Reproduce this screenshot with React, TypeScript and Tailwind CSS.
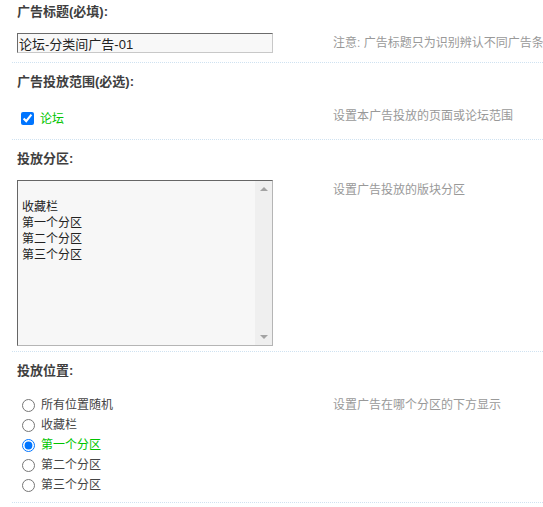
import React, { useState } from "react";

const FONT = { fontFamily: '"Liberation Sans", "Noto Sans CJK SC", sans-serif' };

const zones = ["", "收藏栏", "第一个分区", "第二个分区", "第三个分区"];
const positions = ["所有位置随机", "收藏栏", "第一个分区", "第二个分区", "第三个分区"];

function Heading({ children }: { children: React.ReactNode }) {
  return <div className="h-6 leading-6 pl-[5px] text-[13px] font-bold text-[#3f3f3f]">{children}</div>;
}

function Hint({ children }: { children: React.ReactNode }) {
  return <div className="leading-5 text-xs text-[#999] whitespace-nowrap">{children}</div>;
}

function Row({
  first,
  top,
  bottom,
  title,
  control,
  hint,
}: {
  first?: boolean;
  top: string;
  bottom: string;
  title: string;
  control: React.ReactNode;
  hint: string;
}) {
  return (
    <div className={`${first ? "" : "border-t border-dotted border-[#cfe2f1] pt-[7px]"} ${bottom}`}>
      <Heading>{title}</Heading>
      <div className={`flex ${top}`}>
        <div className="w-[321px] shrink-0 pl-[5px]">{control}</div>
        <Hint>{hint}</Hint>
      </div>
    </div>
  );
}

export default function App() {
  const [title, setTitle] = useState("论坛-分类间广告-01");
  const [forum, setForum] = useState(true);
  const [pos, setPos] = useState(2);

  return (
    <div className="w-full h-[507px] overflow-hidden bg-white" style={FONT}>
      <div className="ml-3">
        <Row
          first
          top="mt-[9px]"
          bottom="pb-[9px]"
          title="广告标题(必填):"
          hint="注意: 广告标题只为识别辨认不同广告条目之用，并不在广告中显示"
          control={
            <input
              value={title}
              onChange={(e) => setTitle(e.target.value)}
              className="block w-[256px] h-5 px-px text-[13px] text-[#222] bg-[#f8f8f8] border border-t-[#6b6b6b] border-l-[#6b6b6b] border-r-[#c8c8c8] border-b-[#c8c8c8] outline-none"
              style={FONT}
            />
          }
        />
        <Row
          top="mt-3"
          bottom="pb-[9px]"
          title="广告投放范围(必选):"
          hint="设置本广告投放的页面或论坛范围"
          control={
            <label className="flex items-center h-6 pt-px">
              <input
                type="checkbox"
                checked={forum}
                onChange={(e) => setForum(e.target.checked)}
                className="w-[13px] h-[13px] m-0 ml-[4px]"
              />
              <span className="ml-[6px] text-xs text-[#00c400]">论坛</span>
            </label>
          }
        />
        <Row
          top="mt-[9px]"
          bottom="pb-[5px]"
          title="投放分区:"
          hint="设置广告投放的版块分区"
          control={
            <div className="flex w-[256px] h-[166px] bg-[#f7f7f7] border border-t-[#666] border-l-[#666] border-r-[#b5b5b5] border-b-[#b5b5b5]">
              <div className="flex-1 pt-[2px] pl-1 text-xs text-[#222]">
                {zones.map((z, i) => (
                  <div key={i} className="h-4 leading-4">
                    {z}
                  </div>
                ))}
              </div>
              <div className="w-[17px] bg-[#efefef] flex flex-col justify-between items-center py-[6px]">
                <div className="w-0 h-0 border-l-[4px] border-r-[4px] border-b-[4px] border-l-transparent border-r-transparent border-b-[#a3a3a3]" />
                <div className="w-0 h-0 border-l-[4px] border-r-[4px] border-t-[4px] border-l-transparent border-r-transparent border-t-[#a3a3a3]" />
              </div>
            </div>
          }
        />
        <Row
          top="mt-3"
          bottom="pb-[7px] border-b border-dotted border-[#cfe2f1]"
          title="投放位置:"
          hint="设置广告在哪个分区的下方显示"
          control={
            <div>
              {positions.map((p, i) => (
                <label key={i} className="flex items-center h-5">
                  <input
                    type="radio"
                    name="pos"
                    checked={pos === i}
                    onChange={() => setPos(i)}
                    className="w-[13px] h-[13px] m-0 ml-[5px]"
                  />
                  <span className={`ml-[6px] text-xs ${pos === i ? "text-[#00c400]" : "text-[#444]"}`}>{p}</span>
                </label>
              ))}
            </div>
          }
        />
      </div>
    </div>
  );
}
